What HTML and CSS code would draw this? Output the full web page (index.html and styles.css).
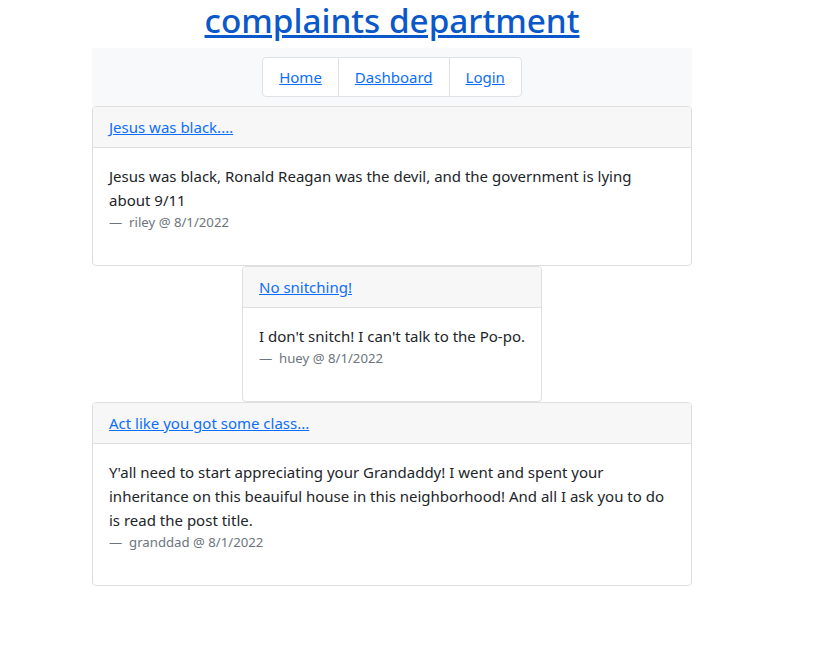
FILE: index.html
```html
<!DOCTYPE html>
<html lang="en">
<head>
<meta charset="utf-8">
<title>complaints department</title>
<link rel="stylesheet" href="styles.css">
</head>
<body>
<div class="page">
  <h1 class="title"><a href="#">complaints department</a></h1>
  <nav class="navbar">
    <ul class="nav-group">
      <li class="nav-item"><a href="#">Home</a></li>
      <li class="nav-item"><a href="#">Dashboard</a></li>
      <li class="nav-item"><a href="#">Login</a></li>
    </ul>
  </nav>
  <div class="card">
    <div class="card-header"><a href="#">Jesus was black....</a></div>
    <div class="card-body">
      <p class="quote">Jesus was black, Ronald Reagan was the devil, and the government is lying about 9/11</p>
      <p class="quote-footer">riley @ 8/1/2022</p>
    </div>
  </div>
  <div class="card card-fit">
    <div class="card-header"><a href="#">No snitching!</a></div>
    <div class="card-body">
      <p class="quote">I don't snitch! I can't talk to the Po-po.</p>
      <p class="quote-footer">huey @ 8/1/2022</p>
    </div>
  </div>
  <div class="card">
    <div class="card-header"><a href="#">Act like you got some class...</a></div>
    <div class="card-body">
      <p class="quote">Y'all need to start appreciating your Grandaddy! I went and spent your inheritance on this beauiful house in this neighborhood! And all I ask you to do is read the post title.</p>
      <p class="quote-footer">granddad @ 8/1/2022</p>
    </div>
  </div>
</div>
</body>
</html>
```

FILE: styles.css
```css
* { box-sizing: border-box; }
html, body {
  margin: 0;
  padding: 0;
  background: #fff;
}
body {
  font-family: "Noto Sans", "Open Sans", sans-serif;
  font-size: 15px;
  line-height: 24px;
  color: #212529;
}
a { color: #0d6efd; text-decoration: underline; }
.page {
  width: 600px;
  margin-left: 92px;
  display: flex;
  flex-direction: column;
}
.title {
  margin: 0;
  text-align: center;
  font-size: 33.3px;
  font-weight: 500;
  line-height: 45px;
  padding: 0 0 3px;
  margin-top: -2px;
  margin-bottom: 2px;
}
.title a { color: #0a58ca; }
.navbar {
  background: #f8f9fa;
  display: flex;
  justify-content: center;
  padding: 9px 0;
}
.nav-group {
  list-style: none;
  margin: 0;
  padding: 0;
  display: flex;
  background: #fff;
  border: 1px solid #dee2e6;
  border-radius: 4px;
}
.nav-item {
  padding: 7px 16px;
  border-left: 1px solid #dee2e6;
}
.nav-item:first-child { border-left: 0; }
.card {
  border: 1px solid #dfdfdf;
  border-radius: 4px;
  background: #fff;
  display: flex;
  flex-direction: column;
}
.card-fit {
  align-self: center;
}
.card-header {
  background: #f7f7f7;
  border-bottom: 1px solid #dfdfdf;
  padding: 8px 16px;
  border-radius: 3px 3px 0 0;
}
.card-body {
  padding: 16px;
}
.quote {
  margin: 0;
}
.quote-footer {
  margin: 0 0 16px;
  font-size: 13.2px;
  line-height: 21px;
  color: #6c757d;
}
.quote-footer::before {
  content: "\2014\00A0\00A0 ";
}
```
